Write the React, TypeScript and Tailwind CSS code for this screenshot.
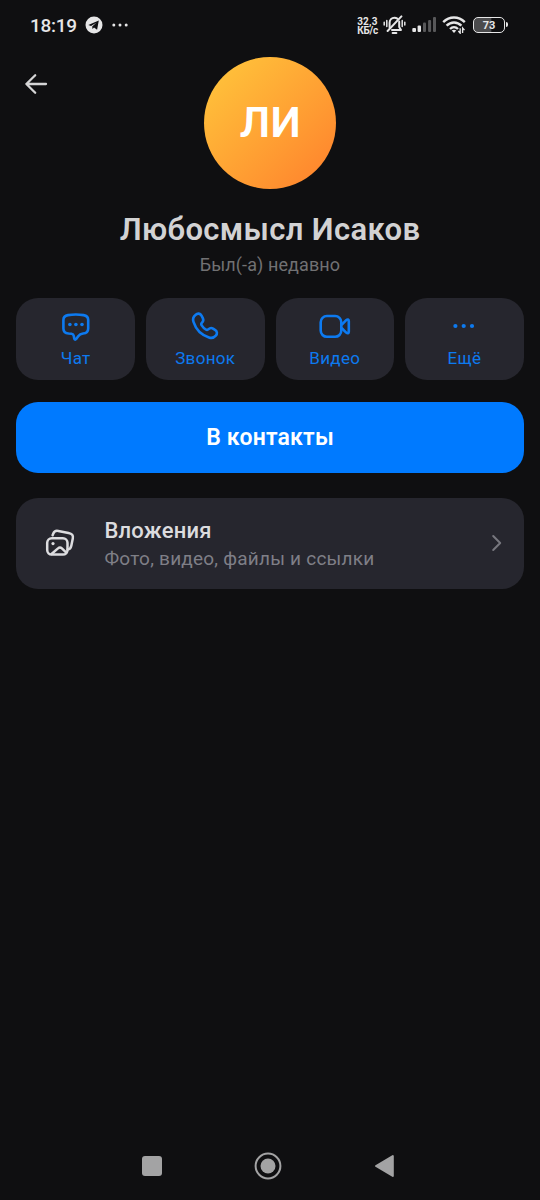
import React from 'react';

interface Action {
  label: string;
  icon: React.ReactNode;
}

const ChatIcon = () => (
  <svg width="30" height="30" viewBox="0 0 30 30" fill="none" stroke="currentColor" strokeWidth="2.6" strokeLinejoin="round">
    <path d="M7 3.1C12 2.3 17.6 2.3 22.6 3.1C25.6 3.6 27.2 5 27.2 8V16.4C27.2 19.6 25.6 21.1 22 21.5C19.4 21.8 18.5 22.4 17.2 24.2L15.2 26.9C14.3 28 13.4 27.7 13.2 26.4L12.8 23.9C12.5 22.3 11.9 21.9 10.4 21.7L7.6 21.5C4 21.1 2.4 19.6 2.4 16.4V8C2.4 5 4 3.6 7 3.1Z" />
    <g fill="currentColor" stroke="none">
      <circle cx="8.9" cy="12.5" r="1.8" />
      <circle cx="14.9" cy="12.5" r="1.8" />
      <circle cx="21" cy="12.5" r="1.8" />
    </g>
  </svg>
);

const CallIcon = () => (
  <svg width="30" height="30" viewBox="0 0 30 30" fill="none" stroke="currentColor" strokeWidth="2.6" strokeLinejoin="round">
    <path d="M5.4 2.9C7.6 1 10.2 1.2 11.5 3.6L12.8 6.1C13.8 8.1 13.4 9.3 12 10.6C11 11.6 11 12.3 11.7 13.4C12.8 15.2 14 16.4 15.8 17.5C16.9 18.2 17.7 18.1 18.6 17.2C20 15.8 21.3 15.5 23 16.6L25 17.9C27.3 19.3 27.5 21.7 25.8 23.7C24.1 25.7 21.6 26.4 19 25.5C11.9 23.2 5.8 17.2 3.5 9.9C2.6 7.2 3.3 4.6 5.4 2.9Z" />
  </svg>
);

const VideoIcon = () => (
  <svg width="32" height="30" viewBox="0 0 32 30" fill="none" stroke="currentColor" strokeWidth="2.6" strokeLinejoin="round">
    <rect x="1.7" y="4" width="20.6" height="20.8" rx="6.2" />
    <path d="M22.6 12.8L27.2 8.2C28.6 7 29.8 7.4 29.8 9V19.8C29.8 21.4 28.6 21.8 27.2 20.6L22.6 16" />
  </svg>
);

const MoreIcon = () => (
  <svg width="30" height="30" viewBox="0 0 30 30" fill="currentColor">
    <circle cx="6.4" cy="14" r="2.1" />
    <circle cx="14.7" cy="14" r="2.1" />
    <circle cx="23" cy="14" r="2.1" />
  </svg>
);

const actions: Action[] = [
  { label: 'Чат', icon: <ChatIcon /> },
  { label: 'Звонок', icon: <CallIcon /> },
  { label: 'Видео', icon: <VideoIcon /> },
  { label: 'Ещё', icon: <MoreIcon /> },
];

function StatusBar() {
  return (
    <div className="flex h-[49px] items-center pl-[30px] pr-8 text-[#e6e6e7]">
      <span className="pt-px text-[19px] font-medium leading-none tracking-[-0.3px]">18:19</span>
      <svg className="ml-2" width="18" height="18" viewBox="0 0 18 18">
        <circle cx="9" cy="9" r="8.5" fill="currentColor" />
        <path d="M3.3 9.1L13.8 4.5L12.1 13.7L9 11.4L7.5 13L7.2 10.4L11.3 6.8L6 9.9Z" fill="#0f0f11" />
      </svg>
      <svg className="ml-[9px]" width="16" height="4" viewBox="0 0 16 4" fill="currentColor">
        <circle cx="1.8" cy="2" r="1.5" />
        <circle cx="8" cy="2" r="1.5" />
        <circle cx="14.2" cy="2" r="1.5" />
      </svg>

      <div className="ml-auto flex items-center">
        <div className="mt-[3px] text-[10px] font-bold leading-[9.5px]">
          <div className="tracking-[0.2px]">32,3</div>
          <div className="tracking-[-0.2px]">КБ/с</div>
        </div>
        {/* muted bell */}
        <svg className="ml-[5px]" width="23" height="20" viewBox="0 0 23 20" fill="none" stroke="currentColor" strokeLinecap="round" strokeLinejoin="round">
          <path d="M6.6 12.5V7.8C6.6 4.8 8.5 2.8 11.5 2.8C12.6 2.8 13.5 3.1 14.3 3.6M16.2 6.6V12L18 15H9" strokeWidth="2" />
          <path d="M18.4 1.4L4.6 16" strokeWidth="2" />
          <path d="M9.6 18H13.4" strokeWidth="1.9" />
          <path d="M3.8 5.5V11.5M1.2 7.2V9.9M19.2 5.5V11.5M21.8 7.2V9.9" strokeWidth="1.5" />
        </svg>
        <svg className="ml-[6px]" width="25" height="17" viewBox="0 0 25 17" fill="currentColor">
          <rect x="0.3" y="12" width="3.7" height="4" rx="1" />
          <rect x="5.6" y="9.5" width="3.4" height="6.5" rx="1" />
          <g fill="#58585a">
            <rect x="11" y="6.5" width="3" height="9.5" rx="1" />
            <rect x="16.1" y="4" width="3" height="12" rx="1" />
            <rect x="21" y="1" width="3" height="15" rx="1" />
          </g>
        </svg>
        <svg className="ml-[5px]" width="25" height="18" viewBox="0 0 25 18" fill="none" stroke="currentColor" strokeWidth="2.4">
          <path d="M1.2 6.2C7.5 0 16.5 0 22.8 6.2" />
          <path d="M4.6 9.7C9 5.4 15 5.4 19.4 9.7" />
          <path d="M8 13C10.4 10.7 13.6 10.7 16 13" />
          <path d="M9.7 14.4Q12 12.9 14.3 14.4L12 17Z" fill="currentColor" stroke="none" />
          <path d="M18.2 12.2V17.2L16.4 15M20.6 17V12L22.5 14.2" strokeWidth="1.3" />
        </svg>
        <div className="ml-[6px] flex h-4 w-8 items-center justify-center rounded-[5px] border-[1.5px] border-[#e6e6e7] bg-linear-to-r from-[#4b4b4d] from-55% to-[#0f0f11] to-60% pt-px text-[11px] font-bold leading-none">
          73
        </div>
        <div className="ml-px h-[5px] w-[2px] rounded-r bg-[#e6e6e7]" />
      </div>
    </div>
  );
}

function AttachmentsIcon() {
  return (
    <svg width="30" height="30" viewBox="0 0 30 30" fill="none" stroke="currentColor" strokeWidth="2.5" strokeLinecap="round" strokeLinejoin="round">
      <rect x="2.2" y="10.2" width="20.3" height="16.4" rx="4.6" />
      <path d="M7.6 7.3L8.3 5.5C9.2 3.1 10.7 2.4 13.3 2.9L23.5 4.9C27 5.6 28.5 7.2 27.8 10.5L26.3 17.8C25.8 20.2 24.8 21.4 22.6 21.6" />
      <path d="M6.5 26L13 20.4C14.4 19.1 15.5 19.1 16.9 20.4L21.3 24.6" />
      <circle cx="8" cy="15.6" r="1.6" fill="currentColor" stroke="none" />
    </svg>
  );
}

function NavigationBar() {
  return (
    <div className="flex h-[68px] items-center pl-[141.5px] text-[#a3a3a4]">
      <div className="size-5 rounded-[3px] bg-current" />
      <svg className="ml-[92.5px]" width="28" height="28" viewBox="0 0 28 28">
        <circle cx="14" cy="14" r="12.4" fill="none" stroke="currentColor" strokeWidth="2" />
        <circle cx="14" cy="14" r="7.5" fill="currentColor" />
      </svg>
      <svg className="ml-[92px]" width="21" height="24" viewBox="0 0 21 24" fill="currentColor" stroke="currentColor" strokeWidth="2" strokeLinejoin="round">
        <path d="M2 12L18.8 2V22Z" />
      </svg>
    </div>
  );
}

export default function App() {
  return (
    <div className="flex h-[1200px] w-[540px] flex-col bg-[#0f0f11] font-[Roboto,sans-serif]">
      <StatusBar />

      <header className="grid grid-cols-[1fr_132px_1fr] items-start pt-[7.5px]">
        <button className="ml-6 mt-[15px] w-fit text-[#d5d5d6]" aria-label="Назад">
          <svg width="24" height="24" viewBox="0 0 24 24" fill="none" stroke="currentColor" strokeWidth="2.3" strokeLinecap="round" strokeLinejoin="round">
            <path d="M22 12H2.4M11.2 3.2L2.4 12L11.2 20.8" />
          </svg>
        </button>
        <div className="flex size-[132px] items-center justify-center rounded-full bg-linear-to-br from-[#ffc83c] to-[#ff7e2c] pl-px text-[43px] font-semibold leading-none tracking-[0.4px] text-white">
          ЛИ
        </div>
      </header>

      <main className="flex flex-1 flex-col px-[16.4px]">
        <h1 className="mt-[22px] text-center text-[31px] font-semibold leading-[38px] tracking-[0.35px] text-[#d2d2d3]">Любосмысл Исаков</h1>
        <p className="mt-[5px] text-center text-[18px] leading-[22px] tracking-[0.1px] text-[#717173]">Был(-а) недавно</p>

        <div className="mt-[22px] grid grid-cols-4 gap-[11px]">
          {actions.map((action) => (
            <button key={action.label} className="flex h-[82px] flex-col items-center rounded-[22px] bg-[#26262e] pt-[14px] text-[#0d7af0]">
              {action.icon}
              <span className="mt-[6px] text-[17px] leading-5 tracking-[0.3px]">{action.label}</span>
            </button>
          ))}
        </div>

        <button className="mt-[22px] h-[71.5px] rounded-[22px] bg-[#007aff] pt-px text-[23px] font-semibold tracking-[0.2px] text-white">
          В контакты
        </button>

        <button className="mt-[25px] flex h-[90.5px] items-center rounded-[22px] bg-[#26262e] pl-[29px] pr-[21px] text-left text-[#dcdcdf]">
          <AttachmentsIcon />
          <div className="ml-[29px] flex-1 pt-[2px]">
            <div className="text-[22px] font-medium leading-7 tracking-[0.2px]">Вложения</div>
            <div className="text-[19px] leading-[27px] tracking-[0.22px] text-[#7f7f87]">Фото, видео, файлы и ссылки</div>
          </div>
          <svg width="12" height="18" viewBox="0 0 12 18" fill="none" stroke="#77777e" strokeWidth="2" strokeLinecap="round" strokeLinejoin="round">
            <path d="M2.2 2L9.2 9L2.2 16" />
          </svg>
        </button>
      </main>

      <NavigationBar />
    </div>
  );
}
